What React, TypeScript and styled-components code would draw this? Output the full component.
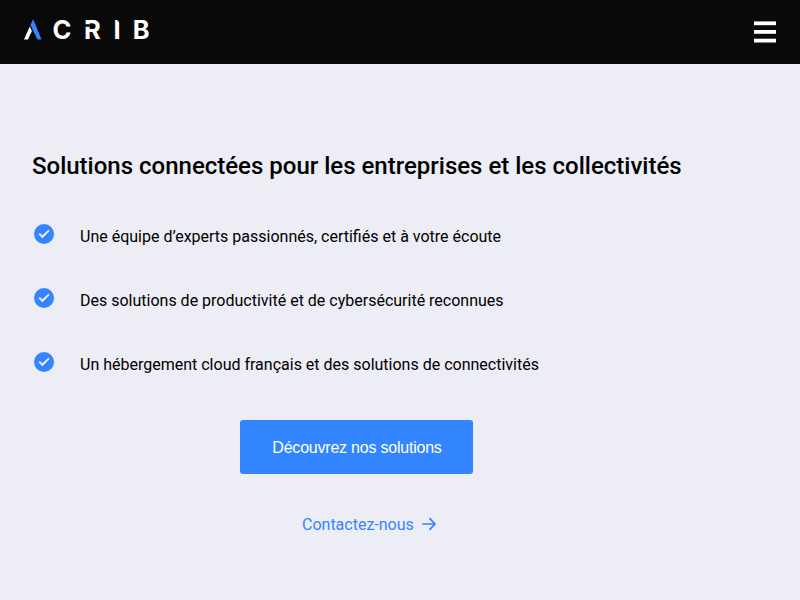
import styled, { createGlobalStyle } from "styled-components";

const GlobalStyle = createGlobalStyle`
  body {
    margin: 0;
    background: #ecedf5;
    color: #000;
    font-family: Roboto, sans-serif;
    font-size: 16px;
  }
`;

const Header = styled.header`
  display: flex;
  justify-content: space-between;
  align-items: center;
  height: 64px;
  padding: 0 24px;
  box-sizing: border-box;
  background: #090909;
`;

const Logo = styled.svg`
  display: block;
  width: 136px;
  height: 32px;
  overflow: visible;
`;

const LogoText = styled.text`
  font-family: Inter, sans-serif;
  font-size: 25.5px;
  font-weight: 700;
  fill: #fff;
`;

const MenuButton = styled.button`
  display: block;
  padding: 0;
  border: none;
  background: none;
  cursor: pointer;

  svg {
    display: block;
  }
`;

const Hero = styled.main`
  padding: 84px 32px 0;
`;

const Title = styled.h1`
  margin: 0;
  font-size: 24px;
  font-weight: 500;
  line-height: 36px;
`;

const Features = styled.ul`
  list-style: none;
  margin: 0;
  padding: 36px 0 0;
`;

const Feature = styled.li`
  display: flex;
  align-items: flex-start;
  height: 64px;
  line-height: 34px;

  svg {
    flex: none;
    margin: 2px 24px 0 0;
  }
`;

const Actions = styled.div`
  display: flex;
  flex-direction: column;
  align-items: flex-start;
  padding: 8px 0 0 208px;
`;

const PrimaryButton = styled.button`
  width: 233px;
  height: 54px;
  padding: 2px 0 0 1px;
  border: none;
  border-radius: 3px;
  background: #3385ff;
  color: #fff;
  font-family: "Liberation Sans", Arial, sans-serif;
  font-size: 16px;
  letter-spacing: -0.22px;
  cursor: pointer;
`;

const ContactLink = styled.a`
  display: flex;
  align-items: center;
  gap: 8px;
  margin: 38px 0 0 62px;
  line-height: 26px;
  color: #3385ff;
  text-decoration: none;

  svg {
    margin-bottom: 2px;
  }
`;

const features = [
  "Une équipe d’experts passionnés, certifiés et à votre écoute",
  "Des solutions de productivité et de cybersécurité reconnues",
  "Un hébergement cloud français et des solutions de connectivités",
];

const CheckIcon = () => (
  <svg width="24" height="24" viewBox="0 0 24 24">
    <circle cx="12" cy="12" r="10" fill="#3385ff" />
    <path d="M7.2 11.6L10.4 14.8L17 8.4" fill="none" stroke="#ecedf5" strokeWidth="2" />
  </svg>
);

const ArrowIcon = () => (
  <svg width="16" height="16" viewBox="0 0 16 16" fill="none" stroke="currentColor" strokeWidth="1.7">
    <path d="M0.2 8H12.6M7.4 2.2L13 8L7.4 13.8" />
  </svg>
);

const AcribLogo = () => (
  <Logo viewBox="0 0 136 32">
    <path d="M0 23.5L5.8 10.5L7.9 15L4 23.5Z" fill="#fff" />
    <path d="M6.4 9L8.7 4H9.5L17.5 23.5H13.4Z" fill="#3385ff" />
    <LogoText x="28.6 60 89.4 108.7" y="23.3">CRIB</LogoText>
    {/* stencil cuts in the R and the I */}
    <path d="M61 8.2h4.8v2.6h-4.8z" fill="#090909" />
    <path d="M93 4h3v3z" fill="#090909" />
  </Logo>
);

export default function App() {
  return (
    <>
      <GlobalStyle />
      <Header>
        <AcribLogo />
        <MenuButton aria-label="Menu">
          <svg width="22" height="22" viewBox="0 0 22 22" fill="#fff">
            <rect y="0.4" width="22" height="3.8" />
            <rect y="9" width="22" height="3.8" />
            <rect y="17.7" width="22" height="3.8" />
          </svg>
        </MenuButton>
      </Header>
      <Hero>
        <Title>Solutions connectées pour les entreprises et les collectivités</Title>
        <Features>
          {features.map((feature) => (
            <Feature key={feature}>
              <CheckIcon />
              {feature}
            </Feature>
          ))}
        </Features>
        <Actions>
          <PrimaryButton>Découvrez nos solutions</PrimaryButton>
          <ContactLink href="#contact">
            Contactez-nous
            <ArrowIcon />
          </ContactLink>
        </Actions>
      </Hero>
    </>
  );
}
